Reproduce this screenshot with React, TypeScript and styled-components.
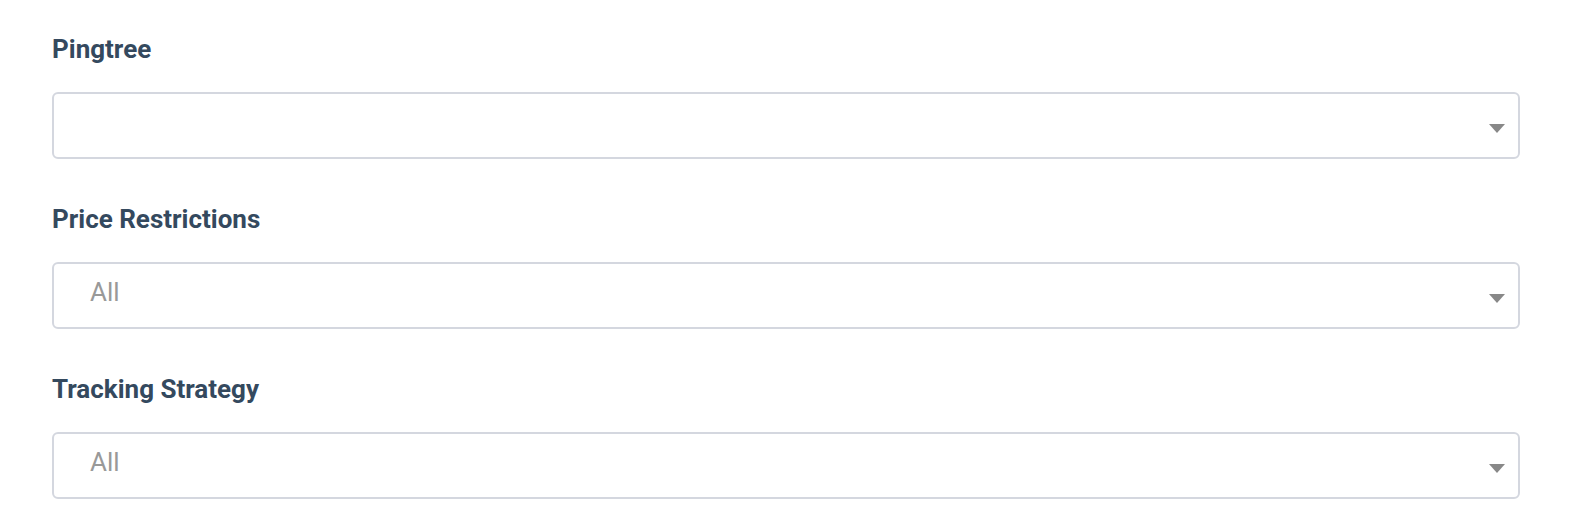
import React from 'react'
import styled, { createGlobalStyle } from 'styled-components'

const GlobalStyle = createGlobalStyle`
  body {
    margin: 0;
    background: #fff;
    font-family: Roboto, 'Liberation Sans', Arial, sans-serif;
  }
`

interface Field {
  label: string
  value?: string
}

const fields: Field[] = [
  { label: 'Pingtree' },
  { label: 'Price Restrictions', value: 'All' },
  { label: 'Tracking Strategy', value: 'All' },
]

const App: React.FC = () => (
  <Root>
    <GlobalStyle />
    {fields.map((field) => (
      <Group key={field.label}>
        <Label>{field.label}</Label>
        <Select>
          <Value>{field.value}</Value>
          <Caret />
        </Select>
      </Group>
    ))}
  </Root>
)

export default App

const Root = styled.div`
  display: flex;
  flex-direction: column;
  gap: 45px;
  padding: 34px 52px 0;
`

const Group = styled.div`
  display: flex;
  flex-direction: column;
  gap: 28px;
`

const Label = styled.div`
  font-size: 26px;
  line-height: 30px;
  font-weight: 700;
  color: #34495e;
`

const Select = styled.div`
  display: flex;
  align-items: center;
  box-sizing: border-box;
  height: 67px;
  padding: 0 13px 7px 36px;
  border: 2px solid #d4d7df;
  border-radius: 6px;
  background: #fff;
`

const Value = styled.span`
  flex: 1;
  font-size: 26px;
  line-height: 30px;
  color: #999;
`

const Caret = styled.span`
  width: 0;
  height: 0;
  margin-top: 13px;
  border-left: 8px solid transparent;
  border-right: 8px solid transparent;
  border-top: 9px solid #888;
`
